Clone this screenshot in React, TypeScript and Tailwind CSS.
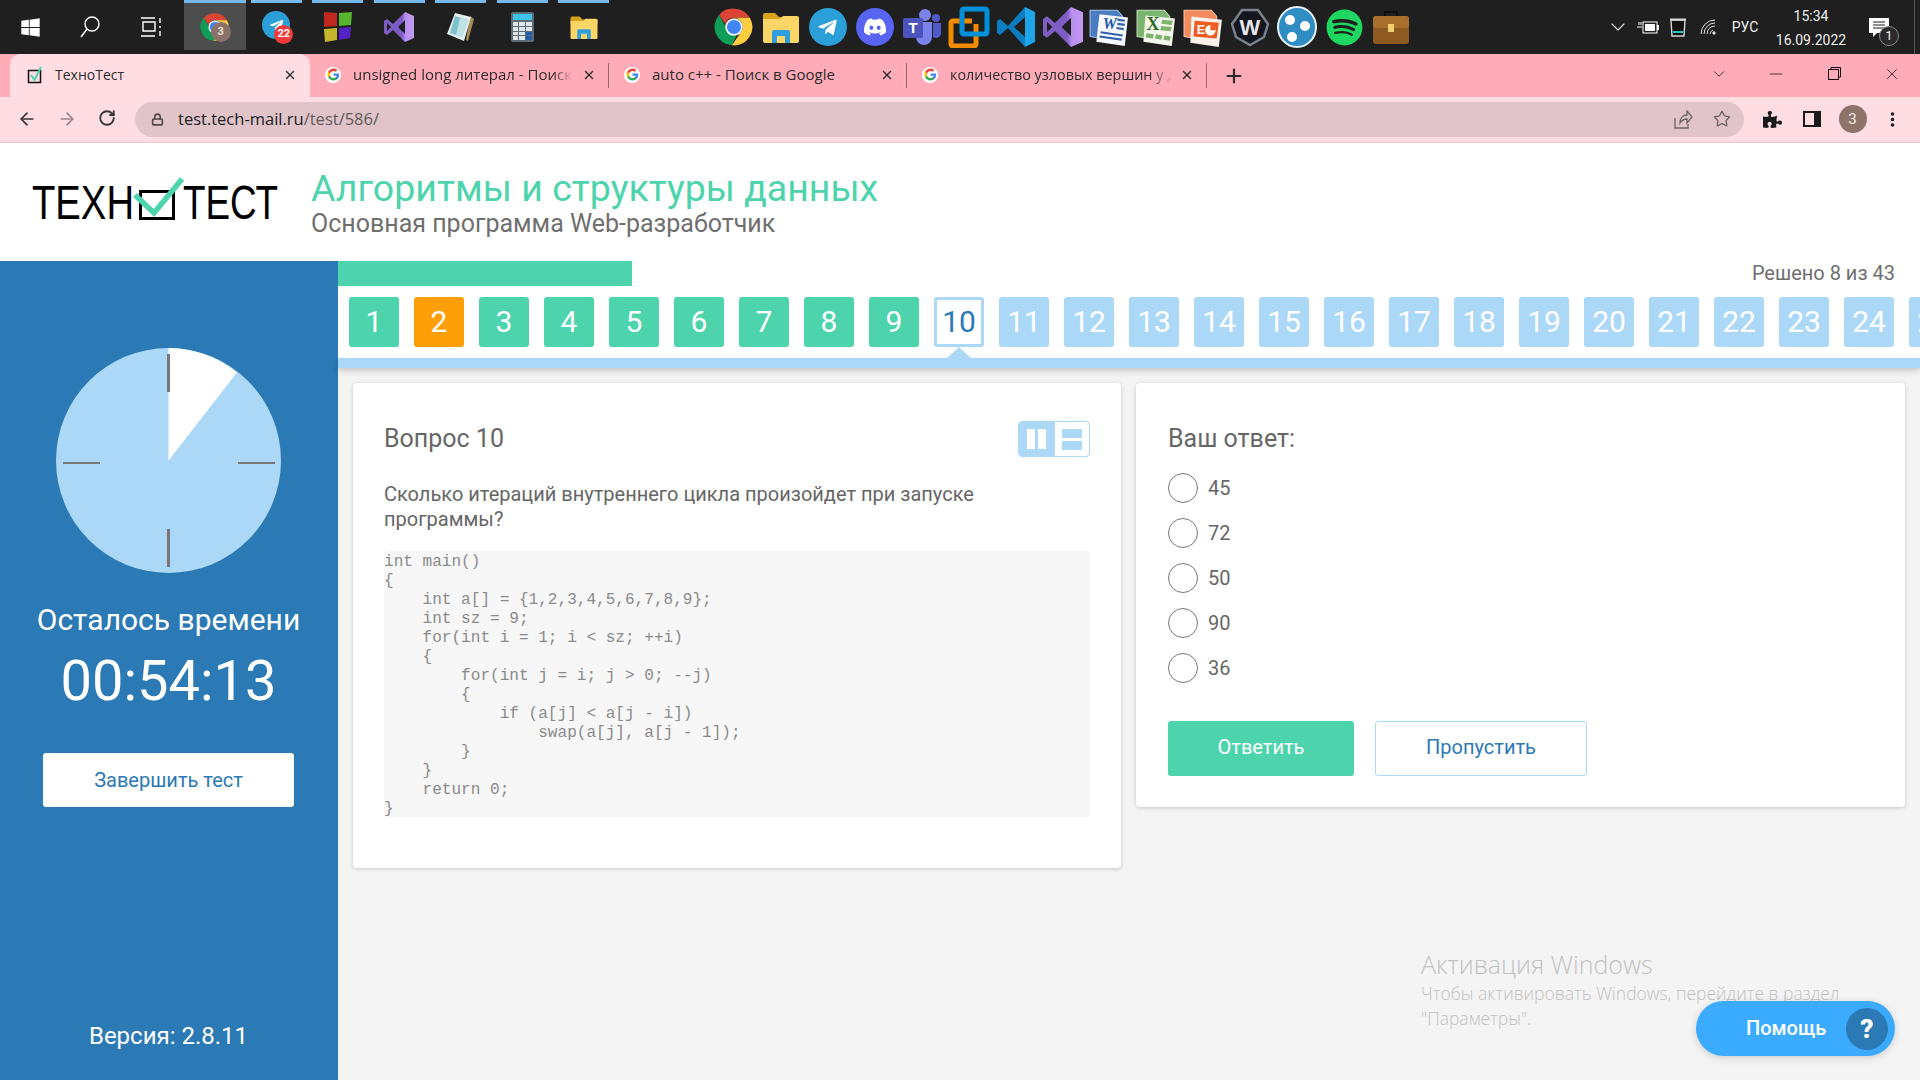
import { ArrowLeft, ArrowRight, ChevronDown, Lock, Minus, MoreVertical, Plus, RotateCw, Star, X } from "lucide-react";
import type { ReactNode } from "react";
import { FaDiscord, FaPuzzlePiece, FaSpotify, FaTelegramPlane, FaWindows } from "react-icons/fa";

const code = `int main()
{
    int a[] = {1,2,3,4,5,6,7,8,9};
    int sz = 9;
    for(int i = 1; i < sz; ++i)
    {
        for(int j = i; j > 0; --j)
        {
            if (a[j] < a[j - i])
                swap(a[j], a[j - 1]);
        }
    }
    return 0;
}`;

const answers = ["45", "72", "50", "90", "36"];

function ChromeLogo({ size }: { size: number }) {
  return (
    <svg width={size} height={size} viewBox="0 0 48 48">
      <path fill="#db4437" d="M24 2a22 22 0 0 1 19 11H24a11 11 0 0 0-10.5 7.5L6 9.5A22 22 0 0 1 24 2z" />
      <path fill="#0f9d58" d="M6 9.5l9.5 16.5A11 11 0 0 0 27 34.6L21.5 45.9A22 22 0 0 1 6 9.5z" />
      <path fill="#ffcd40" d="M43 13a22 22 0 0 1-21.5 32.9L32.5 30A11 11 0 0 0 32 16.5 11 11 0 0 0 24 13z" />
      <circle cx="24" cy="24" r="10.5" fill="#fff" />
      <circle cx="24" cy="24" r="8.5" fill="#4285f4" />
    </svg>
  );
}

function GoogleG() {
  return (
    <span className="flex h-[16px] w-[16px] shrink-0 items-center justify-center rounded-full bg-white">
      <svg width="13" height="13" viewBox="0 0 48 48">
        <path fill="#4285F4" d="M45.12 24.5c0-1.56-.14-3.06-.4-4.5H24v8.51h11.84c-.51 2.75-2.06 5.08-4.39 6.64v5.52h7.11c4.16-3.83 6.56-9.47 6.56-16.17z" />
        <path fill="#34A853" d="M24 46c5.94 0 10.92-1.97 14.56-5.33l-7.11-5.52c-1.97 1.32-4.49 2.1-7.45 2.1-5.73 0-10.58-3.87-12.31-9.07H4.34v5.7C7.96 41.07 15.4 46 24 46z" />
        <path fill="#FBBC05" d="M11.69 28.18C11.25 26.86 11 25.45 11 24s.25-2.86.69-4.18v-5.7H4.34C2.85 17.09 2 20.45 2 24c0 3.55.85 6.91 2.34 9.88l7.35-5.7z" />
        <path fill="#EA4335" d="M24 10.75c3.23 0 6.13 1.11 8.41 3.29l6.31-6.31C34.91 4.18 29.93 2 24 2 15.4 2 7.96 6.93 4.34 14.12l7.35 5.7c1.73-5.2 6.58-9.07 12.31-9.07z" />
      </svg>
    </span>
  );
}

function FolderIcon({ size }: { size: number }) {
  return (
    <svg width={size} height={size} viewBox="0 0 40 40">
      <path fill="#d9a21b" d="M2 8a2 2 0 0 1 2-2h10l4 4h20v6H2z" />
      <path fill="#fbd667" d="M2 12h17l3-3h14a2 2 0 0 1 2 2v23a2 2 0 0 1-2 2H4a2 2 0 0 1-2-2z" />
      <path fill="#2d9fe0" d="M11 36V25a2 2 0 0 1 2-2h14a2 2 0 0 1 2 2v11h-5v-7h-8v7z" />
    </svg>
  );
}

function VsIcon({ size }: { size: number }) {
  return (
    <svg width={size} height={size} viewBox="0 0 30 30">
      <defs>
        <linearGradient id="vsTone" x1="0" x2="1" y1="0" y2="0">
          <stop offset="0" stopColor="#7d5cc4" />
          <stop offset="0.6" stopColor="#7d5cc4" />
          <stop offset="0.72" stopColor="#b98ff0" />
          <stop offset="1" stopColor="#c19bf2" />
        </linearGradient>
      </defs>
      <path fill="url(#vsTone)" fillRule="evenodd" d="M21 0l9 4v22l-9 4L9 18l-6 5-3-2V9l3-2 6 5zM21 8l-7 7 7 7zM3 11v8l4-4z" />
    </svg>
  );
}

function WordIcon() {
  return (
    <svg width="40" height="40" viewBox="0 0 38 38">
      <path fill="#4a7cc4" stroke="#a9c2e6" d="M1 3h26l5 6v24L1 28z" />
      <path fill="#f6f9fd" d="M10 7l27 3-3 27-27-4z" />
      <text x="13" y="21" fontFamily="Liberation Serif, serif" fontSize="15" fontWeight="700" fontStyle="italic" fill="#2457a6">W</text>
      <path stroke="#2f62ad" strokeWidth="2" d="M27 12l7 1M27 16l7 1M26 20l7 1M11 24l21 3M10 28l21 3" />
    </svg>
  );
}

function ExcelIcon() {
  return (
    <svg width="40" height="40" viewBox="0 0 38 38">
      <path fill="#7cb56f" stroke="#c4dfbd" d="M1 3h26l5 6v24L1 28z" />
      <path fill="#f4f8ec" d="M9 8l28 3-3 26-27-4z" />
      <text x="10" y="22" fontFamily="Liberation Serif, serif" fontSize="17" fontWeight="700" fill="#2f6b2b">X</text>
      <path fill="#7fb26a" d="M25 12l10 1-1 4-10-1zM24 18l10 1-1 4-10-1zM10 25l7 1-1 4-7-1zM19 26l6 1-1 4-6-1zM27 27l6 1-1 4-6-1z" />
    </svg>
  );
}

function PowerPointIcon() {
  return (
    <svg width="40" height="40" viewBox="0 0 38 38">
      <path fill="#f58a5c" stroke="#f8c8ae" d="M1 3h26l5 6v24L1 28z" />
      <path fill="#fbf2ec" d="M8 9l29 3-3 26-27-4z" />
      <path fill="#ee5a1f" d="M11 13l23 2-2 15-22-2z" />
      <text x="13" y="26" fontFamily="Liberation Sans, sans-serif" fontSize="12" fontWeight="700" fill="#fff">E</text>
      <circle cx="26" cy="22" r="5" fill="#fff" />
      <path fill="#ee5a1f" d="M26 22v-5a5 5 0 0 1 5 5z" />
    </svg>
  );
}

function CenterIcon({ children }: { children: ReactNode }) {
  return <div className="flex h-[54px] w-[46.95px] items-center justify-center">{children}</div>;
}

function PinnedIcon({ children, active }: { children: ReactNode; active?: boolean }) {
  return (
    <div className={active ? "flex h-[50px] w-[61.5px] flex-col items-center bg-[#4d4d4d]" : "flex h-[50px] w-[61.5px] flex-col items-center"}>
      <div className={active ? "h-[3px] w-full bg-[#76b9ed]" : "h-[3px] w-[51px] bg-[#76b9ed]"} />
      <div className="flex flex-1 items-center justify-center pt-[1px]">{children}</div>
    </div>
  );
}

function Taskbar() {
  return (
    <div className="flex h-[54px] shrink-0 bg-[#1f1f1f] text-white">
      <div className="flex h-[54px] w-[60px] items-center justify-center"><FaWindows size={21} /></div>
      <div className="flex h-[54px] w-[59px] items-center justify-center">
        <svg width="22" height="24" viewBox="0 0 22 24" fill="none" stroke="#fff" strokeWidth="1.4"><circle cx="13" cy="9" r="7" /><path d="M8 14l-6 8" /></svg>
      </div>
      <div className="flex h-[54px] w-[65px] items-center justify-center pr-[4px]">
        <svg width="24" height="24" viewBox="0 0 24 24" fill="none" stroke="#fff" strokeWidth="1.4"><path d="M3 3h14M5 7h12v9H5zM3 21h14M22 3v5M22 11v2M22 16v5" /></svg>
      </div>
      <PinnedIcon active>
        <div className="relative">
          <ChromeLogo size={30} />
          <span className="absolute left-[11px] top-[10px] flex h-[20px] w-[20px] items-center justify-center rounded-full bg-[#8b7268] font-['Roboto',sans-serif] text-[11px] font-bold text-[#e9e2de]">3</span>
        </div>
      </PinnedIcon>
      <PinnedIcon>
        <div className="relative flex h-[28px] w-[28px] -translate-y-[2px] items-center justify-center rounded-full bg-[#2a9fd8]">
          <FaTelegramPlane size={15} />
          <span className="absolute left-[12px] top-[14px] flex h-[19px] w-[19px] items-center justify-center rounded-full bg-[#ef3b3b] font-['Roboto',sans-serif] text-[11px] font-bold">22</span>
        </div>
      </PinnedIcon>
      <PinnedIcon>
        <svg width="30" height="32" viewBox="0 0 30 32">
          <path fill="#c0281e" d="M1 1l13 1v13l-13 1z" />
          <path fill="#58b52f" d="M16 2l13-1-1 13-12 1z" />
          <path fill="#c4b82a" d="M1 18l13-1v12L2 31z" />
          <path fill="#5423c4" d="M16 17l12-1-1 11-11 2z" />
        </svg>
      </PinnedIcon>
      <PinnedIcon><VsIcon size={30} /></PinnedIcon>
      <PinnedIcon>
        <svg width="30" height="30" viewBox="0 0 30 30">
          <path fill="#a58a52" d="M24 4l4 3-6 22-2-1z" />
          <path fill="#e4eff0" d="M9 1l16 4-7 24L1 22z" />
          <path fill="#7fc1c9" d="M9 4l13 4-6 17L4 21z" />
          <path fill="#bfe2e2" d="M14 6l8 2-6 17-6-2z" />
        </svg>
      </PinnedIcon>
      <PinnedIcon>
        <div className="flex h-[30px] w-[23px] flex-col gap-[2px] rounded-[2px] bg-[#5d6b77] p-[2px]">
          <span className="h-[6px] bg-[#3ec3e8]" />
          <div className="grid flex-1 grid-cols-3 gap-[1px]">
            {Array.from({ length: 12 }).map((_, i) => (
              <span key={i} className={i === 8 || i === 11 ? "bg-[#1f5fa8]" : "bg-[#dfe6ea]"} />
            ))}
          </div>
        </div>
      </PinnedIcon>
      <PinnedIcon><FolderIcon size={30} /></PinnedIcon>

      <div className="ml-[96px] flex">
        <CenterIcon><ChromeLogo size={40} /></CenterIcon>
        <CenterIcon><FolderIcon size={40} /></CenterIcon>
        <CenterIcon>
          <div className="flex h-[38px] w-[38px] items-center justify-center rounded-full bg-[#2a9fd8]"><FaTelegramPlane size={21} /></div>
        </CenterIcon>
        <CenterIcon>
          <div className="flex h-[38px] w-[38px] items-center justify-center rounded-full bg-[#5865f2]"><FaDiscord size={24} /></div>
        </CenterIcon>
        <CenterIcon>
          <svg width="40" height="40" viewBox="0 0 40 40">
            <circle cx="23" cy="8" r="6" fill="#7b83eb" />
            <circle cx="34" cy="11" r="4" fill="#5059c9" />
            <path fill="#7b83eb" d="M14 15h16v15a8 8 0 0 1-16 0z" />
            <path fill="#5059c9" d="M31 16h8v11a5 5 0 0 1-8 3z" />
            <rect x="1" y="11" width="20" height="20" rx="2" fill="#4b53bc" />
            <text x="11" y="26" textAnchor="middle" fontFamily="Liberation Sans, sans-serif" fontSize="15" fontWeight="700" fill="#fff">T</text>
          </svg>
        </CenterIcon>
        <CenterIcon>
          <svg width="42" height="42" viewBox="0 0 42 42" fill="none" strokeWidth="5">
            <path stroke="#f38b00" d="M24 15H5a2 2 0 0 0-2 2v21a2 2 0 0 0 2 2h21a2 2 0 0 0 2-2V18" />
            <path stroke="#0091da" d="M14 22V5a2 2 0 0 1 2-2h21a2 2 0 0 1 2 2v21a2 2 0 0 1-2 2H16a2 2 0 0 1-2-2z" />
          </svg>
        </CenterIcon>
        <CenterIcon>
          <svg width="40" height="42" viewBox="0 0 40 42">
            <path fill="#1ea4e9" d="M29 1l10 5v30l-10 5z" />
            <path fill="#0a7cc1" d="M29 1L12 20 4 13l-3 2v12l3 2 8-7 17 19 0-10-11-10 11-10z" />
          </svg>
        </CenterIcon>
        <CenterIcon><VsIcon size={40} /></CenterIcon>
        <CenterIcon><WordIcon /></CenterIcon>
        <CenterIcon><ExcelIcon /></CenterIcon>
        <CenterIcon><PowerPointIcon /></CenterIcon>
        <CenterIcon>
          <svg width="40" height="40" viewBox="0 0 40 40">
            <path fill="#14161d" stroke="#7b818b" strokeWidth="2.5" d="M12 3h16l10 14-4 13-14 8-14-8-4-13z" />
            <text x="20" y="28" textAnchor="middle" fontFamily="Liberation Sans, sans-serif" fontSize="22" fontWeight="700" fill="#e4e6ea">W</text>
          </svg>
        </CenterIcon>
        <CenterIcon>
          <svg width="40" height="42" viewBox="0 0 40 42">
            <ellipse cx="20" cy="21" rx="19" ry="20" fill="#2f8dc4" stroke="#e8f2f8" strokeWidth="2" />
            <circle cx="13" cy="14" r="5" fill="#fff" />
            <circle cx="28" cy="20" r="5" fill="#fff" />
            <circle cx="15" cy="31" r="5" fill="#fff" />
          </svg>
        </CenterIcon>
        <CenterIcon>
          <div className="flex h-[36px] w-[36px] items-center justify-center rounded-full bg-[#1f1f1f]"><FaSpotify size={37} className="shrink-0 text-[#1ed760]" /></div>
        </CenterIcon>
        <CenterIcon>
          <svg width="38" height="36" viewBox="0 0 38 36">
            <path fill="none" stroke="#0f0f0f" strokeWidth="2" d="M13 8V3h12v5" />
            <rect x="1" y="7" width="36" height="28" rx="3" fill="#8f5a22" />
            <rect x="1" y="7" width="36" height="12" rx="3" fill="#a9702d" />
            <rect x="16" y="15" width="6" height="8" fill="#f0cf70" />
          </svg>
        </CenterIcon>
      </div>

      <div className="ml-auto flex h-[54px] items-center font-['Roboto',sans-serif] text-[14px] text-[#eeeeee]">
        <div className="flex w-[30px] justify-center"><ChevronDown size={24} strokeWidth={1.1} /></div>
        <div className="flex w-[30px] justify-center">
          <svg width="22" height="14" viewBox="0 0 22 14"><path d="M0 7h5M2 2v3M4 2v3" stroke="#fff" fill="none" /><rect x="6" y="2" width="14" height="11" fill="#1f1f1f" stroke="#fff" /><rect x="8" y="4" width="10" height="7" fill="#fff" /><rect x="20" y="5" width="2" height="5" fill="#fff" /></svg>
        </div>
        <div className="flex w-[30px] justify-center">
          <svg width="18" height="20" viewBox="0 0 18 20"><path d="M2 3h14l-1 16H3z" fill="#111" stroke="#d8d8d8" strokeWidth="1.4" /><path d="M1 2.5h16" stroke="#d8d8d8" strokeWidth="2" /><path d="M4 15h10" stroke="#22c7c0" strokeWidth="2" /></svg>
        </div>
        <div className="flex w-[30px] justify-center">
          <svg width="16" height="16" viewBox="0 0 16 16" fill="none" stroke="#e0e0e0" strokeWidth="1"><path d="M1 15A14 14 0 0 1 15 1M4 15A11 11 0 0 1 15 4M7 15A8 8 0 0 1 15 7M10 15A5 5 0 0 1 13 11" /><circle cx="14" cy="14" r="1.2" fill="#e0e0e0" /></svg>
        </div>
        <div className="w-[44px] text-center">РУС</div>
        <div className="mt-[1px] flex w-[88px] flex-col items-center gap-[4px] leading-[20px]">
          <span>15:34</span>
          <span>16.09.2022</span>
        </div>
        <div className="relative flex h-[54px] w-[48px] items-center justify-center">
          <svg width="20" height="19" viewBox="0 0 20 19"><path fill="#fff" d="M0 0h20v15H8l-4 4v-4H0z" /><path stroke="#1f1f1f" strokeWidth="1" d="M4 4h12M4 7h12M4 10h12" /></svg>
          <span className="absolute left-[24px] top-[26px] flex h-[20px] w-[20px] items-center justify-center rounded-full border border-[#8a8a8a] bg-[#2a2a2a] text-[13px]">1</span>
        </div>
        <div className="ml-[11px] mr-[5px] h-[54px] w-[1px] bg-[#5a5a5a]" />
      </div>
    </div>
  );
}

function Tab({ title, active, fade, width, favicon, size }: { title: string; active?: boolean; fade?: boolean; width: string; favicon?: ReactNode; size?: string }) {
  return (
    <div className={`flex h-[43px] shrink-0 items-center pb-[2px] ${width} ${size ?? "text-[15px]"} ${active ? "rounded-t-[10px] bg-[#ffdde3] pl-[17px] pr-[13px]" : "pl-[15px] pr-[12px]"}`}>
      {favicon ?? <GoogleG />}
      <span className={fade ? "ml-[12px] flex-1 overflow-hidden whitespace-nowrap [mask-image:linear-gradient(to_right,black_90%,transparent)]" : "ml-[12px] flex-1 overflow-hidden whitespace-nowrap"}>{title}</span>
      <X size={14} strokeWidth={2.4} className="ml-[8px] shrink-0" />
    </div>
  );
}

function Divider() {
  return <div className="h-[25px] w-[1px] shrink-0 bg-[#8f6c74]" />;
}

function Browser() {
  return (
    <>
      <div className="flex h-[43px] shrink-0 items-center bg-[#ffabb8] font-['Open_Sans',sans-serif] text-[#2b2b2b]">
        <div className="flex items-center pl-[10px]">
          <Tab
            active
            size="text-[14px]"
            width="w-[300px]"
            title="ТехноТест"
            favicon={
              <svg width="16" height="18" viewBox="0 0 16 18" className="shrink-0" fill="none">
                <rect x="1.5" y="4.5" width="12" height="12" stroke="#111" strokeWidth="1.5" />
                <path d="M4 9l3.5 5L14 1" stroke="#4dd4ac" strokeWidth="2" />
              </svg>
            }
          />
          <Tab fade width="w-[298px]" title="unsigned long литерал - Поиск в Google" />
          <Divider />
          <Tab width="w-[297px]" title="auto c++ - Поиск в Google" />
          <Divider />
          <Tab fade size="text-[14.4px]" width="w-[299px]" title="количество узловых вершин у дерева" />
          <Divider />
          <Plus size={22} strokeWidth={2.4} className="ml-[16px]" />
        </div>
        <div className="ml-auto flex items-center pb-[4px] text-[#222222]">
          <ChevronDown size={18} strokeWidth={1.2} />
          <div className="ml-[19px] flex w-[58px] justify-center"><Minus size={20} strokeWidth={1} /></div>
          <div className="flex w-[58px] justify-center">
            <svg width="13" height="13" viewBox="0 0 13 13" fill="none" stroke="#111"><rect x="0.5" y="2.5" width="10" height="10" /><path d="M3 2.5V.5h9.5V10h-2" /></svg>
          </div>
          <div className="flex w-[57px] justify-center"><X size={18} strokeWidth={1.1} /></div>
        </div>
      </div>

      <div className="flex h-[46px] shrink-0 items-center border-b border-[#f2c6cf] bg-[#ffdde3] pb-[1px]">
        <div className="flex pl-[7px] text-[#333333]">
          <div className="flex w-[40px] justify-center"><ArrowLeft size={20} strokeWidth={2} /></div>
          <div className="flex w-[40px] justify-center text-[#9a8589]"><ArrowRight size={20} strokeWidth={2} /></div>
          <div className="flex w-[40px] justify-center"><RotateCw size={18} strokeWidth={2.4} /></div>
        </div>
        <div className="ml-[8px] flex h-[35px] flex-1 items-center rounded-full bg-[#e0c4c9] pl-[16px] pr-[13px] font-['Open_Sans',sans-serif] text-[16.5px]">
          <Lock size={13} strokeWidth={3} className="text-[#4d4649]" />
          <span className="ml-[14px] text-[#202124]">
            test.tech-mail.ru<span className="text-[#5f5a5c]">/test/586/</span>
          </span>
          <div className="ml-auto flex items-center gap-[20px] text-[#6b6467]">
            <svg width="19" height="19" viewBox="0 0 19 19" fill="none" stroke="currentColor" strokeWidth="1.3"><path d="M1 8v10h13v-4M6 13c0-5 3-8 7-8V1l5 6-5 6V9c-3 0-5 1-7 4z" /></svg>
            <Star size={18} strokeWidth={1.8} />
          </div>
        </div>
        <div className="ml-[8px] flex pr-[8px] text-[#1a1a1a]">
          <div className="flex w-[40px] items-center justify-center"><FaPuzzlePiece size={19} /></div>
          <div className="flex w-[40px] items-center justify-center">
            <svg width="18" height="16" viewBox="0 0 18 16"><rect width="18" height="16" fill="#1a1a1a" /><rect x="2" y="2" width="9" height="12" fill="#ffdde3" /></svg>
          </div>
          <div className="flex w-[40px] items-center justify-center pl-[1px]">
            <span className="flex h-[28px] w-[28px] items-center justify-center rounded-full bg-[#8d7368] font-['Roboto',sans-serif] text-[15px] text-[#f5ecea]">3</span>
          </div>
          <div className="flex w-[40px] items-center justify-center"><MoreVertical size={19} strokeWidth={2.6} /></div>
        </div>
      </div>
    </>
  );
}

function Sidebar() {
  return (
    <aside className="flex h-full w-[338px] shrink-0 flex-col items-center bg-[#2b79b5] pr-[1px] pt-[87px] text-white">
      <svg width="225" height="225" viewBox="0 0 225 225" className="shrink-0">
        <circle cx="112.5" cy="112.5" r="112.5" fill="#acd8f7" />
        <path fill="#fff" d="M112.5 112.5V0a112.5 112.5 0 0 1 68.5 24.5z" />
        <path stroke="#777777" strokeWidth="3" d="M112.5 6v38M112.5 181v38" />
        <path stroke="#777777" strokeWidth="2" d="M7 115h37M182 115h37" />
      </svg>
      <div className="mt-[29px] text-[30px] leading-[36px]">Осталось времени</div>
      <div className="mt-[10px] text-[56px] leading-[66px]">00:54:13</div>
      <button className="mt-[39px] h-[54px] w-[251px] shrink-0 rounded-[3px] bg-white pb-[1px] text-[20px] text-[#2b79b5]">Завершить тест</button>
      <div className="mb-[29px] mt-auto text-[24px] leading-[30px]">Версия: 2.8.11</div>
    </aside>
  );
}

function NavRow() {
  const items = Array.from({ length: 25 }, (_, i) => i + 1);
  return (
    <div className="flex gap-[15px] overflow-hidden pb-[11px] pl-[11px] pt-[11px]">
      {items.map((n) => {
        const base = "relative flex h-[50px] w-[50px] shrink-0 items-center justify-center rounded-[3px] pb-[1px] text-[30px]";
        if (n === 10) {
          return (
            <div key={n} className={`${base} border-[3px] border-[#acd8f7] bg-white text-[#2b79b5]`}>
              {n}
              <span className="absolute left-1/2 top-[47px] h-0 w-0 -translate-x-1/2 border-x-[12px] border-b-[11px] border-x-transparent border-b-[#acd8f7]" />
            </div>
          );
        }
        const tone = n === 2 ? "bg-[#ff9f08]" : n < 10 ? "bg-[#4dd4ac]" : "bg-[#acd8f7]";
        return (
          <div key={n} className={`${base} ${tone} text-white`}>
            {n}
          </div>
        );
      })}
    </div>
  );
}

function QuestionCard() {
  return (
    <section className="h-[485px] w-[768px] shrink-0 rounded-[4px] bg-white px-[31px] pt-[38px] shadow-[0_1px_4px_rgba(0,0,0,0.18)]">
      <div className="flex h-[36px] items-center justify-between">
        <h2 className="text-[25px] text-[#666666]">Вопрос 10</h2>
        <div className="flex h-[36px] w-[72px] overflow-hidden rounded-[4px] border border-[#acd8f7]">
          <div className="flex w-[36px] items-center justify-center gap-[3px] bg-[#acd8f7] pr-[1px]">
            <span className="h-[20px] w-[8px] bg-white" />
            <span className="h-[20px] w-[8px] bg-white" />
          </div>
          <div className="flex flex-1 flex-col items-center justify-center gap-[3px]">
            <span className="h-[9px] w-[20px] bg-[#acd8f7]" />
            <span className="h-[9px] w-[20px] bg-[#acd8f7]" />
          </div>
        </div>
      </div>
      <p className="mt-[25px] w-[640px] text-[20px] leading-[25px] text-[#666666]">Сколько итераций внутреннего цикла произойдет при запуске программы?</p>
      <pre className="mt-[19px] h-[266px] rounded-[4px] bg-[#f7f7f7] pt-[2px] font-['Liberation_Mono',monospace] text-[16.07px] leading-[19px] text-[#8a8a8a]">{code}</pre>
    </section>
  );
}

function AnswerCard() {
  return (
    <section className="h-[424px] w-[769px] shrink-0 rounded-[4px] bg-white px-[32px] pt-[38px] shadow-[0_1px_4px_rgba(0,0,0,0.18)]">
      <h2 className="flex h-[36px] items-center text-[25px] text-[#666666]">Ваш ответ:</h2>
      <div className="mt-[16px] flex flex-col gap-[15px]">
        {answers.map((a) => (
          <label key={a} className="flex h-[30px] items-center gap-[10px] text-[20px] text-[#666666]">
            <span className="h-[30px] w-[30px] rounded-full border border-[#777777]" />
            {a}
          </label>
        ))}
      </div>
      <div className="mt-[38px] flex gap-[21px]">
        <button className="h-[55px] w-[186px] rounded-[3px] bg-[#4dd4ac] pb-[3px] text-[20px] text-white">Ответить</button>
        <button className="h-[55px] w-[212px] rounded-[3px] border border-[#acd8f7] bg-white pb-[3px] text-[20px] text-[#2b79b5]">Пропустить</button>
      </div>
    </section>
  );
}

export default function App() {
  return (
    <div className="relative flex h-screen w-full flex-col overflow-hidden bg-[#f4f4f4] font-['Roboto',sans-serif]">
      <Taskbar />
      <Browser />

      <header className="flex h-[118px] shrink-0 items-center bg-white pl-[32px]">
        <svg width="250" height="50" viewBox="0 0 250 50" className="shrink-0 overflow-visible">
          <text x="0" y="42" fontFamily="Liberation Sans, sans-serif" fontSize="49" textLength="102" lengthAdjust="spacingAndGlyphs" fill="#000">ТЕХН</text>
          <rect x="108.5" y="14.5" width="33" height="27" fill="none" stroke="#000" strokeWidth="3" />
          <path d="M103 18l19 18L150 2" fill="none" stroke="#4dd4ac" strokeWidth="5.5" />
          <text x="151" y="42" fontFamily="Liberation Sans, sans-serif" fontSize="49" textLength="95" lengthAdjust="spacingAndGlyphs" fill="#000">ТЕСТ</text>
        </svg>
        <div className="ml-[29px] mt-[3px]">
          <h1 className="text-[37.5px] leading-[40px] text-[#4dd4ac]">Алгоритмы и структуры данных</h1>
          <div className="mt-[1px] text-[25px] leading-[30px] text-[#6f6f6f]">Основная программа Web-разработчик</div>
        </div>
      </header>

      <div className="flex min-h-0 flex-1">
        <Sidebar />
        <main className="flex min-w-0 flex-1 flex-col">
          <div className="bg-white">
            <div className="flex items-start">
              <div className="h-[25px] w-[294px] bg-[#4dd4ac]" />
              <div className="ml-auto pr-[25px] text-[20px] leading-[24px] text-[#6f6f6f]">Решено 8 из 43</div>
            </div>
            <NavRow />
          </div>
          <div className="h-[10px] shrink-0 bg-[#acd8f7] shadow-[0_3px_6px_rgba(0,0,0,0.18)]" />
          <div className="mt-[15px] flex items-start gap-[15px] pl-[15px]">
            <QuestionCard />
            <AnswerCard />
          </div>
        </main>
      </div>

      <div className="absolute left-[1421px] top-[948px] font-['Open_Sans',sans-serif] font-light text-[#c2c2c2]">
        <div className="text-[25px] leading-[32px]">Активация Windows</div>
        <div className="mt-[1px] text-[17.5px] leading-[25px]">Чтобы активировать Windows, перейдите в раздел</div>
        <div className="text-[17.5px] leading-[24px]">"Параметры".</div>
      </div>

      <button className="absolute bottom-[24px] right-[25px] flex h-[55px] w-[199px] items-center rounded-full bg-[#3aabff] pb-[1px] pl-[50px] text-[20px] font-medium text-white shadow-[0_2px_8px_rgba(0,0,0,0.15)]">
        Помощь
        <span className="absolute right-[7px] top-[7px] flex h-[42px] w-[42px] items-center justify-center rounded-full bg-[#2b79b5] text-[26px] font-black">?</span>
      </button>
    </div>
  );
}
